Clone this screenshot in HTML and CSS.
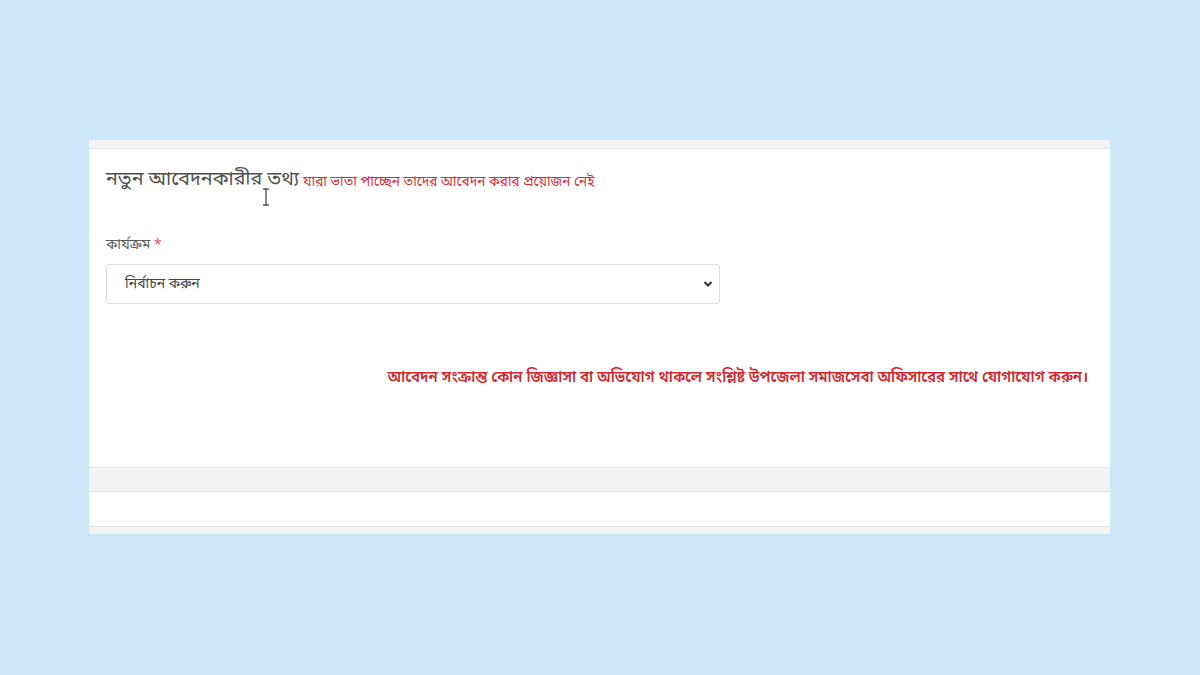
FILE: index.html
```html
<!DOCTYPE html>
<html lang="bn">
<head>
<meta charset="utf-8">
<link rel="stylesheet" href="styles.css">
</head>
<body>
<div class="page">
  <div class="card">
    <div class="strip-top"></div>
    <div class="body">
      <div class="heading">
        <span class="title">নতুন আবেদনকারীর তথ্য</span>
        <span class="subnote">যারা ভাতা পাচ্ছেন তাদের আবেদন করার প্রয়োজন নেই</span>
        <svg class="cursor" width="8" height="18" viewBox="0 0 8 18"><path d="M1 1h6M4 1v16M1 17h6" stroke="#555" stroke-width="1.4" fill="none"/></svg>
      </div>
      <div class="field">
        <label class="label">কার্যক্রম <span class="req">*</span></label>
        <div class="select">
          <span>নির্বাচন করুন</span>
          <svg width="10" height="8" viewBox="0 0 10 8"><path d="M1.5 2l3.5 3.5L8.5 2" stroke="#333" stroke-width="2" fill="none"/></svg>
        </div>
      </div>
      <p class="notice">আবেদন সংক্রান্ত কোন জিজ্ঞাসা বা অভিযোগ থাকলে সংশ্লিষ্ট উপজেলা সমাজসেবা অফিসারের সাথে যোগাযোগ করুন।</p>
    </div>
    <div class="band"></div>
    <div class="white2"></div>
    <div class="strip-bottom"></div>
  </div>
</div>
</body>
</html>
```
FILE: styles.css
```css
* { box-sizing: border-box; }
html, body { margin: 0; padding: 0; }
body {
  width: 1200px;
  height: 675px;
  background: #cde6f8;
  font-family: "Noto Sans Bengali", "Lohit Bengali", "Noto Sans", "DejaVu Sans", sans-serif;
  overflow: hidden;
}
.page {
  padding: 140px 90px 0 89px;
}
.card {
  width: 1021px;
  background: #fff;
  display: flex;
  flex-direction: column;
}
.strip-top {
  height: 9px;
  background: #f3f3f3;
  border-bottom: 1px solid #e6e6e6;
}
.body {
  height: 318px;
  padding: 18px 22px 0 17px;
}
.heading {
  position: relative;
  display: flex;
  align-items: baseline;
  gap: 4px;
  height: 40px;
}
.title {
  font-size: 19.6px;
  color: #505050;
}
.subnote {
  font-size: 13.6px;
  color: #d6313a;
  position: relative;
  top: 1px;
}
.cursor {
  position: absolute;
  left: 156px;
  top: 21px;
}
.field {
  margin-top: 29px;
}
.label {
  display: block;
  font-size: 14px;
  color: #5a5a5a;
  height: 28px;
}
.req { color: #e05060; }
.select {
  width: 614px;
  height: 40px;
  border: 1px solid #dcdcdc;
  border-radius: 3px;
  display: flex;
  align-items: center;
  justify-content: space-between;
  padding: 0 6px 0 18px;
  font-size: 14px;
  color: #444;
}
.notice {
  margin: 64px 0 0;
  text-align: right;
  font-size: 15px;
  font-weight: 600;
  color: #d0282f;
}
.band {
  height: 25px;
  background: #f3f3f3;
  border-top: 1px solid #e3e3e3;
  border-bottom: 1px solid #e3e3e3;
}
.white2 {
  height: 34px;
  background: #fff;
}
.strip-bottom {
  height: 8px;
  background: #f4f4f4;
  border-top: 1px solid #e3e3e3;
}
```
